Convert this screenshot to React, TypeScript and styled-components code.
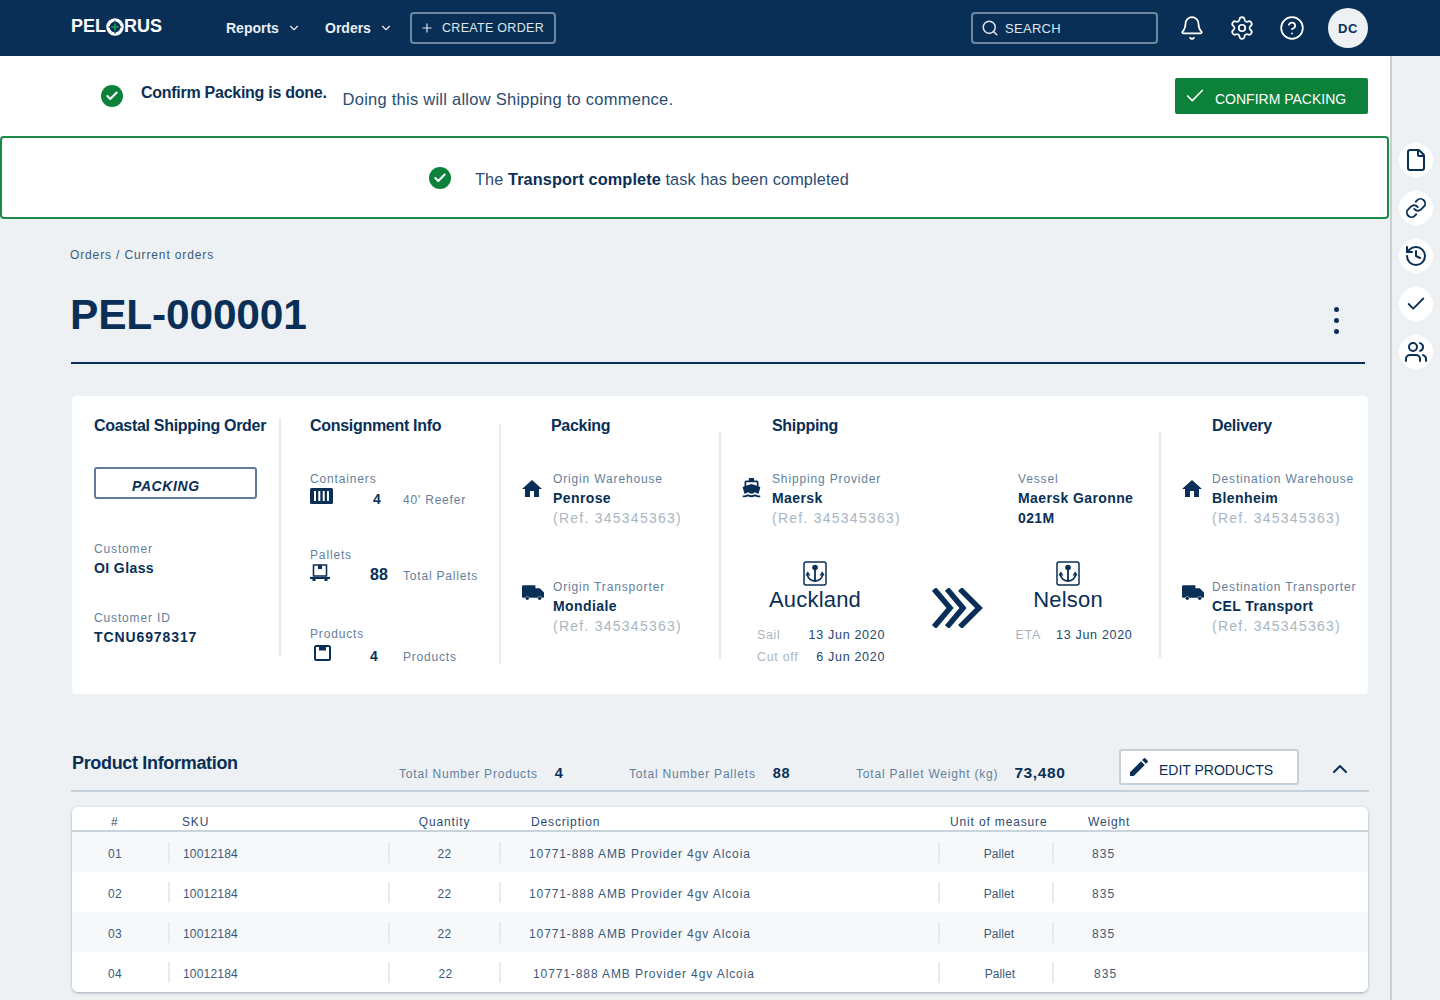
import { FC, ReactNode } from "react";
import styled, { createGlobalStyle } from "styled-components";
import {
  Bell,
  Check,
  ChevronDown,
  ChevronUp,
  CircleHelp,
  File,
  History,
  Link,
  Plus,
  Search,
  Settings,
  Users,
} from "lucide-react";
import { MdDirectionsBoat, MdEdit, MdHome } from "react-icons/md";

const NAVY = "#0a2f56";
const SLATE = "#64809c";
const MUTED = "#a9b6c3";
const GREEN = "#0b8139";
const BG = "#edf1f4";
const RULE = "#e6ebef";

const GlobalStyle = createGlobalStyle`
  html, body {
    margin: 0;
    padding: 0;
    background: ${BG};
    font-family: "Liberation Sans", Arial, sans-serif;
    color: ${NAVY};
    overflow: hidden;
  }
  * { box-sizing: border-box; }
`;

const Page = styled.div`
  width: 1440px;
  height: 1000px;
  display: flex;
  flex-direction: column;
`;

// Top navigation
const Nav = styled.header`
  height: 56px;
  flex: none;
  background: ${NAVY};
  color: #fff;
  display: flex;
  align-items: center;
  padding: 0 72px 0 71px;
`;

const Logo = styled.div`
  display: flex;
  align-items: center;
  width: 155px;
  font-size: 18px;
  font-weight: 700;
  margin-top: -3px;
`;

const NavLink = styled.div<{ $width: number }>`
  display: flex;
  align-items: center;
  gap: 8px;
  width: ${(p) => p.$width}px;
  font-size: 14px;
  font-weight: 700;
  color: #e9eef3;
`;

const CreateButton = styled.div`
  width: 146px;
  height: 32px;
  margin-left: -10px;
  border: 2px solid #6f87a0;
  border-radius: 4px;
  display: flex;
  align-items: center;
  gap: 8px;
  padding-left: 8px;
  font-size: 12.5px;
  letter-spacing: 0.3px;
  color: #dfe6ed;
  white-space: nowrap;
`;

const SearchBox = styled.div`
  width: 187px;
  height: 32px;
  margin-left: auto;
  border: 2px solid #6f87a0;
  border-radius: 4px;
  display: flex;
  align-items: center;
  gap: 6px;
  padding-left: 8px;
  font-size: 13px;
  letter-spacing: 0.3px;
  color: #dfe6ed;
`;

const NavIcons = styled.div`
  display: flex;
  align-items: center;
  gap: 24px;
  margin-left: 21px;
`;

const Avatar = styled.div`
  width: 40px;
  height: 40px;
  margin-left: -1px;
  border-radius: 50%;
  background: ${BG};
  color: ${NAVY};
  font-size: 13px;
  font-weight: 700;
  letter-spacing: 0.5px;
  display: flex;
  align-items: center;
  justify-content: center;
`;

const Body = styled.div`
  flex: 1;
  display: flex;
  min-height: 0;
`;

const Main = styled.main`
  width: 1390px;
  flex: none;
`;

const Rail = styled.aside`
  flex: 1;
  border-left: 2px solid #c9ced3;
  display: flex;
  flex-direction: column;
  align-items: center;
  gap: 14px;
  padding-top: 87px;
`;

const RailButton = styled.div`
  width: 34px;
  height: 34px;
  border-radius: 50%;
  background: #fff;
  display: flex;
  align-items: center;
  justify-content: center;
`;

// Banners
const ConfirmBar = styled.section`
  height: 80px;
  background: #fff;
  display: flex;
  align-items: center;
  padding: 0 22px 0 101px;
`;

const StatusDot = styled.div`
  width: 22px;
  height: 22px;
  flex: none;
  border-radius: 50%;
  background: ${GREEN};
  color: #fff;
  display: flex;
  align-items: center;
  justify-content: center;
`;

const ConfirmTitle = styled.strong`
  margin-left: 18px;
  margin-top: -6px;
  font-size: 16px;
  letter-spacing: -0.27px;
`;

const ConfirmText = styled.span`
  margin-left: 16px;
  margin-top: 6px;
  font-size: 16.5px;
  letter-spacing: 0.25px;
  color: #2b4c70;
`;

const ConfirmButton = styled.div`
  width: 193px;
  height: 36px;
  margin-left: auto;
  background: ${GREEN};
  border-radius: 2px;
  color: #fff;
  display: flex;
  align-items: center;
  gap: 9px;
  padding-left: 9px;
  font-size: 14px;

  span {
    margin-top: 6px;
  }
`;

const Alert = styled.section`
  width: 1389px;
  height: 83px;
  background: #fff;
  border: 2px solid #1d8a48;
  border-radius: 4px;
  display: flex;
  align-items: center;
  padding-left: 427px;
  gap: 24px;
  font-size: 16.3px;
  letter-spacing: 0.1px;
  color: #2b4c70;

  span {
    margin-top: 3px;
  }

  strong {
    color: ${NAVY};
  }
`;

// Order header
const Content = styled.div`
  padding: 28px 22px 0 70px;
`;

const Breadcrumb = styled.div`
  font-size: 12px;
  line-height: 16px;
  letter-spacing: 0.87px;
  color: #3c5a7a;
`;

const TitleRow = styled.div`
  height: 90px;
  margin: 11px 3px 0 1px;
  padding-bottom: 7px;
  border-bottom: 2px solid ${NAVY};
  display: flex;
  align-items: center;
  justify-content: space-between;
`;

const OrderTitle = styled.h1`
  margin: 0 0 0 -1px;
  font-size: 42.5px;
  font-weight: 700;
  letter-spacing: -0.2px;
  color: #0a2f56;
`;

const Kebab = styled.div`
  display: flex;
  flex-direction: column;
  gap: 6px;
  margin: 11px 26px 0 0;

  i {
    width: 5px;
    height: 5px;
    border-radius: 50%;
    background: ${NAVY};
  }
`;

// Summary card
const Card = styled.section`
  width: 1296px;
  height: 298px;
  margin: 32px 0 0 2px;
  background: #fff;
  border-radius: 4px;
  display: flex;
`;

const Column = styled.div<{ $width: number; $left: number }>`
  width: ${(p) => p.$width}px;
  flex: none;
  padding: 21px 0 0 ${(p) => p.$left}px;
`;

const VRule = styled.div<{ $top: number; $height: number }>`
  width: 2px;
  flex: none;
  align-self: flex-start;
  margin-top: ${(p) => p.$top}px;
  height: ${(p) => p.$height}px;
  background: ${RULE};
`;

const Heading = styled.h3<{ $indent?: number }>`
  margin: 0 0 -1px ${(p) => p.$indent ?? 0}px;
  font-size: 16px;
  line-height: 18px;
  font-weight: 700;
  letter-spacing: -0.3px;
  white-space: nowrap;
`;

const StatusBox = styled.div`
  width: 163px;
  height: 32px;
  margin-top: 33px;
  border: 2px solid #5f7d9a;
  border-radius: 3px;
  padding-left: 36px;
  font-size: 14px;
  line-height: 35px;
  font-weight: 700;
  font-style: italic;
  letter-spacing: 0.6px;
`;

const Label = styled.div`
  font-size: 12px;
  line-height: 18px;
  letter-spacing: 0.85px;
  color: ${SLATE};
  white-space: nowrap;
`;

const Strong = styled.div<{ $spacing?: number }>`
  font-size: 14px;
  line-height: 20px;
  font-weight: 700;
  letter-spacing: ${(p) => p.$spacing ?? 0.4}px;
  white-space: nowrap;
`;

const Ref = styled.div`
  font-size: 14px;
  line-height: 20px;
  letter-spacing: 1.25px;
  color: ${MUTED};
  white-space: nowrap;
`;

const Field = styled.div<{ $top: number }>`
  margin-top: ${(p) => p.$top}px;
`;

const StatRow = styled.div<{ $top?: number }>`
  display: grid;
  grid-template-columns: 60px 33px auto;
  align-items: center;
  height: 20px;
  margin-top: ${(p) => p.$top ?? 1}px;
`;

const StatIcon = styled.div`
  align-self: start;
  margin-top: -1px;
  line-height: 0;
`;

const StatNumber = styled.span<{ $size?: number; $indent?: number }>`
  padding-left: ${(p) => p.$indent ?? 0}px;
  font-size: ${(p) => p.$size ?? 14}px;
  font-weight: 700;
`;

const StatText = styled.span`
  margin-top: 2px;
  font-size: 12px;
  letter-spacing: 0.8px;
  color: ${SLATE};
`;

const Party = styled.div<{ $top: number; $gap?: number }>`
  display: grid;
  grid-template-columns: ${(p) => p.$gap ?? 31}px auto;
  margin-top: ${(p) => p.$top}px;
`;

const PartyIcon = styled.div`
  padding-top: 7px;
  line-height: 0;
`;

const ShipRow = styled.div`
  display: flex;
  margin-top: 36px;
`;

const ShipProvider = styled.div`
  width: 276px;
`;

const RouteRow = styled.div`
  display: flex;
  margin-top: 33px;
`;

const Port = styled.div<{ $width: number }>`
  width: ${(p) => p.$width}px;
  flex: none;
  display: flex;
  flex-direction: column;
  align-items: center;
`;

const PortName = styled.div`
  font-size: 22px;
  line-height: 28px;
  letter-spacing: 0.2px;
`;

const Dates = styled.div`
  margin: 12px 0 0 12px;
  display: flex;
  flex-direction: column;
  gap: 4px;
`;

const DateRow = styled.div<{ $gap: number }>`
  display: flex;
  justify-content: space-between;
  gap: ${(p) => p.$gap}px;
  font-size: 12.5px;
  line-height: 18px;
  letter-spacing: 0.7px;
  color: #24476b;
  white-space: nowrap;

  span {
    color: ${MUTED};
  }
`;

const Arrows = styled.div`
  width: 51px;
  flex: none;
  margin: 27px 0 0 44px;
  line-height: 0;
`;

// Product section
const ProductHeader = styled.div`
  width: 1298px;
  height: 43px;
  margin: 55px 0 0 1px;
  border-bottom: 2px solid #c5d0d9;
  display: flex;
  align-items: flex-start;
`;

const ProductTitle = styled.h2`
  width: 327px;
  margin: 3px 0 0 1px;
  font-size: 18px;
  line-height: 22px;
  letter-spacing: -0.33px;
`;

const Totals = styled.div`
  display: flex;
  align-items: center;
  height: 20px;
  margin-top: 14px;
  width: 720px;
`;

const TotalItem = styled.div<{ $width: number; $gap?: number }>`
  width: ${(p) => p.$width}px;
  flex: none;
  display: flex;
  align-items: center;
  gap: ${(p) => p.$gap ?? 17}px;
`;

const TotalValue = styled.span<{ $size?: number }>`
  font-size: ${(p) => p.$size ?? 14.5}px;
  font-weight: 700;
  letter-spacing: 0.6px;
`;

const EditButton = styled.div`
  width: 180px;
  height: 36px;
  flex: none;
  background: #fff;
  border: 2px solid #c5d0d9;
  border-radius: 3px;
  display: flex;
  align-items: center;
  gap: 8px;
  padding-left: 6px;
  font-size: 14px;
  color: ${NAVY};

  span {
    margin-top: 5px;
  }
`;

const Collapse = styled.div`
  margin: 8px 0 0 29px;
  line-height: 0;
`;

const Table = styled.section`
  width: 1296px;
  margin: 15px 0 0 2px;
  background: #fff;
  border-radius: 6px;
  box-shadow: 0 1px 3px rgba(60, 80, 100, 0.45);
  overflow: hidden;
`;

const GRID = "96px 220px 111px 439px 114px 316px";

const HeadRow = styled.div`
  display: grid;
  grid-template-columns: ${GRID};
  height: 25px;
  padding-top: 7px;
  border-bottom: 2px solid #c8d3dc;
  align-items: center;
  font-size: 12px;
  letter-spacing: 0.85px;
  color: #2b4c70;
`;

const HeadCell = styled.div<{ $center?: boolean; $indent?: number }>`
  padding-left: ${(p) => p.$indent ?? 0}px;
  text-align: ${(p) => (p.$center ? "center" : "left")};
  white-space: nowrap;
`;

const Row = styled.div<{ $shade: boolean }>`
  display: grid;
  grid-template-columns: ${GRID};
  height: 40px;
  align-items: center;
  background: ${(p) => (p.$shade ? "#f6f8f9" : "#fff")};
`;

const Cell = styled.div<{ $center?: boolean; $indent?: number; $rule?: boolean; $spacing?: number }>`
  height: 21px;
  line-height: 25px;
  padding-left: ${(p) => p.$indent ?? 0}px;
  text-align: ${(p) => (p.$center ? "center" : "left")};
  border-left: ${(p) => (p.$rule ? `2px solid ${RULE}` : "0")};
  font-size: 12px;
  letter-spacing: ${(p) => p.$spacing ?? 0.4}px;
  color: #3c5a7a;
  white-space: nowrap;
`;

// Drawn icons
const Truck: FC = () => (
  <svg width="22" height="16" viewBox="0 0 23 16" fill={NAVY}>
    <path d="M0 1.5A1.5 1.5 0 0 1 1.5 0H14v3h4.500L23 7.500V12a1 1 0 0 1-1 1h-1.200a2.400 2.400 0 0 0-4.600 0H7.800a2.400 2.400 0 0 0-4.600 0H1a1 1 0 0 1-1-1z" />
    <circle cx="5.500" cy="13.500" r="1.800" />
    <circle cx="18.500" cy="13.500" r="1.800" />
  </svg>
);

const ContainerIcon: FC = () => (
  <svg width="23" height="16" viewBox="0 0 23 16">
    <rect width="23" height="16" rx="1.500" fill={NAVY} />
    <path d="M5 3v10M9.300 3v10M13.700 3v10M18 3v10" stroke="#fff" strokeWidth="2" />
  </svg>
);

const PalletIcon: FC = () => (
  <svg width="20" height="18" viewBox="0 0 20 18" fill="none">
    <path d="M3.500 1h13v11h-13z" stroke={NAVY} strokeWidth="1.600" />
    <path d="M8 1h4v4H8z" fill={NAVY} />
    <path d="M0 13h20v2H17.500v2h-3v-2h-9v2h-3v-2H0z" fill={NAVY} />
  </svg>
);

const BoxIcon: FC = () => (
  <svg width="24" height="16" viewBox="0 0 24 16" fill="none">
    <rect x="5" y="1" width="15" height="14" rx="1.500" stroke={NAVY} strokeWidth="2" />
    <path d="M9 1h7v4.500H9z" fill={NAVY} />
  </svg>
);

const AnchorIcon: FC = () => (
  <svg width="24" height="25" viewBox="0 0 24 25" fill="none">
    <rect x="1" y="1" width="22" height="23" rx="2" stroke={NAVY} strokeWidth="1.500" />
    <circle cx="12" cy="6.500" r="2.800" fill={NAVY} />
    <path d="M12 8v12M4.500 13c0 4.500 3.500 7 7.500 7s7.500-2.500 7.500-7" stroke={NAVY} strokeWidth="1.800" />
    <path d="M3 14.500 4.800 11.500l2 3M17.200 14.500l2-3 1.800 3" stroke={NAVY} strokeWidth="1.300" />
  </svg>
);

const TripleChevron: FC = () => (
  <svg width="51" height="40" viewBox="0 0 51 40" fill="none" stroke={NAVY} strokeWidth="5.500">
    <path d="M2 1l16 19L2 39" />
    <path d="M15 1l16 19-16 19" />
    <path d="M28 1l19 19-19 19" />
  </svg>
);

const LogoMark: FC = () => (
  <svg width="18" height="18" viewBox="0 0 19 19">
    <circle cx="9.500" cy="9.500" r="7.500" fill="none" stroke="#fff" strokeWidth="3.500" />
    <path d="M9.500 1.500 11.300 7.700 17.500 9.500 11.300 11.300 9.500 17.500 7.700 11.300 1.500 9.500 7.700 7.700z" fill={NAVY} />
    <path d="M9.500 4 10.800 8.200 15 9.500 10.800 10.800 9.500 15 8.200 10.800 4 9.500 8.200 8.200z" fill="#1d8a48" />
  </svg>
);

const Tick: FC<{ size?: number }> = ({ size = 14 }) => (
  <Check size={size} strokeWidth={3.5} />
);

interface PartyProps {
  top: number;
  icon: ReactNode;
  label: string;
  name: string;
  gap?: number;
}

const PartyBlock: FC<PartyProps> = ({ top, icon, label, name, gap }) => (
  <Party $top={top} $gap={gap}>
    <PartyIcon>{icon}</PartyIcon>
    <div>
      <Label>{label}</Label>
      <Strong>{name}</Strong>
      <Ref>(Ref. 345345363)</Ref>
    </div>
  </Party>
);

const rows = ["01", "02", "03", "04"];

const App: FC = () => {
  return (
    <Page>
      <GlobalStyle />
      <Nav>
        <Logo>
          PEL
          <LogoMark />
          RUS
        </Logo>
        <NavLink $width={99}>
          Reports <ChevronDown size={14} />
        </NavLink>
        <NavLink $width={95}>
          Orders <ChevronDown size={14} />
        </NavLink>
        <CreateButton>
          <Plus size={14} />
          CREATE ORDER
        </CreateButton>
        <SearchBox>
          <Search size={18} />
          SEARCH
        </SearchBox>
        <NavIcons>
          <Bell size={26} strokeWidth={1.6} />
          <Settings size={26} strokeWidth={1.6} />
          <CircleHelp size={26} strokeWidth={1.6} />
          <Avatar>DC</Avatar>
        </NavIcons>
      </Nav>
      <Body>
        <Main>
          <ConfirmBar>
            <StatusDot>
              <Tick />
            </StatusDot>
            <ConfirmTitle>Confirm Packing is done.</ConfirmTitle>
            <ConfirmText>Doing this will allow Shipping to commence.</ConfirmText>
            <ConfirmButton>
              <Check size={22} strokeWidth={1.8} />
              <span>CONFIRM PACKING</span>
            </ConfirmButton>
          </ConfirmBar>
          <Alert>
            <StatusDot>
              <Tick />
            </StatusDot>
            <span>
              The <strong>Transport complete</strong> task has been completed
            </span>
          </Alert>
          <Content>
            <Breadcrumb>Orders / Current orders</Breadcrumb>
            <TitleRow>
              <OrderTitle>PEL-000001</OrderTitle>
              <Kebab>
                <i />
                <i />
                <i />
              </Kebab>
            </TitleRow>
            <Card>
              <Column $width={207} $left={22}>
                <Heading>Coastal Shipping Order</Heading>
                <StatusBox>PACKING</StatusBox>
                <Field $top={41}>
                  <Label>Customer</Label>
                  <Strong>OI Glass</Strong>
                </Field>
                <Field $top={31}>
                  <Label>Customer ID</Label>
                  <Strong $spacing={0.9}>TCNU6978317</Strong>
                </Field>
              </Column>
              <VRule $top={22} $height={238} />
              <Column $width={218} $left={29}>
                <Heading>Consignment Info</Heading>
                <Field $top={36}>
                  <Label>Containers</Label>
                  <StatRow>
                    <StatIcon>
                      <ContainerIcon />
                    </StatIcon>
                    <StatNumber $indent={3}>4</StatNumber>
                    <StatText>40' Reefer</StatText>
                  </StatRow>
                </Field>
                <Field $top={37}>
                  <Label>Pallets</Label>
                  <StatRow>
                    <StatIcon>
                      <PalletIcon />
                    </StatIcon>
                    <StatNumber $size={16}>88</StatNumber>
                    <StatText>Total Pallets</StatText>
                  </StatRow>
                </Field>
                <Field $top={40}>
                  <Label>Products</Label>
                  <StatRow $top={3}>
                    <StatIcon>
                      <BoxIcon />
                    </StatIcon>
                    <StatNumber>4</StatNumber>
                    <StatText>Products</StatText>
                  </StatRow>
                </Field>
              </Column>
              <VRule $top={28} $height={240} />
              <Column $width={218} $left={21}>
                <Heading $indent={29}>Packing</Heading>
                <PartyBlock
                  top={36}
                  label="Origin Warehouse"
                  name="Penrose"
                  icon={<MdHome size={24} color={NAVY} style={{ marginLeft: -2 }} />}
                />
                <PartyBlock top={50} label="Origin Transporter" name="Mondiale" icon={<Truck />} />
              </Column>
              <VRule $top={36} $height={228} />
              <Column $width={438} $left={21}>
                <Heading $indent={30}>Shipping</Heading>
                <ShipRow>
                  <ShipProvider>
                    <PartyBlock
                      top={0}
                      gap={30}
                      label="Shipping Provider"
                      name="Maersk"
                      icon={<MdDirectionsBoat size={21} color={NAVY} style={{ marginLeft: -1 }} />}
                    />
                  </ShipProvider>
                  <div>
                    <Label>Vessel</Label>
                    <Strong>Maersk Garonne</Strong>
                    <Strong>021M</Strong>
                  </div>
                </ShipRow>
                <RouteRow>
                  <Port $width={146}>
                    <AnchorIcon />
                    <PortName>Auckland</PortName>
                    <Dates>
                      <DateRow $gap={28}>
                        <span>Sail</span>13 Jun 2020
                      </DateRow>
                      <DateRow $gap={15}>
                        <span>Cut off</span>6 Jun 2020
                      </DateRow>
                    </Dates>
                  </Port>
                  <Arrows>
                    <TripleChevron />
                  </Arrows>
                  <Port $width={170}>
                    <AnchorIcon />
                    <PortName>Nelson</PortName>
                    <Dates>
                      <DateRow $gap={15}>
                        <span>ETA</span>13 Jun 2020
                      </DateRow>
                    </Dates>
                  </Port>
                </RouteRow>
              </Column>
              <VRule $top={36} $height={226} />
              <Column $width={205} $left={21}>
                <Heading $indent={30}>Delivery</Heading>
                <PartyBlock
                  top={36}
                  gap={30}
                  label="Destination Warehouse"
                  name="Blenheim"
                  icon={<MdHome size={24} color={NAVY} style={{ marginLeft: -2 }} />}
                />
                <PartyBlock
                  top={50}
                  gap={30}
                  label="Destination Transporter"
                  name="CEL Transport"
                  icon={<Truck />}
                />
              </Column>
            </Card>
            <ProductHeader>
              <ProductTitle>Product Information</ProductTitle>
              <Totals>
                <TotalItem $width={230}>
                  <StatText>Total Number Products</StatText>
                  <TotalValue>4</TotalValue>
                </TotalItem>
                <TotalItem $width={227}>
                  <StatText>Total Number Pallets</StatText>
                  <TotalValue>88</TotalValue>
                </TotalItem>
                <TotalItem $width={263} $gap={16}>
                  <StatText>Total Pallet Weight (kg)</StatText>
                  <TotalValue $size={15.5}>73,480</TotalValue>
                </TotalItem>
              </Totals>
              <EditButton>
                <MdEdit size={24} color={NAVY} />
                <span>EDIT PRODUCTS</span>
              </EditButton>
              <Collapse>
                <ChevronUp size={24} strokeWidth={2} color={NAVY} />
              </Collapse>
            </ProductHeader>
            <Table>
              <HeadRow>
                <HeadCell $indent={39}>#</HeadCell>
                <HeadCell $indent={14}>SKU</HeadCell>
                <HeadCell $center $indent={2}>
                  Quantity
                </HeadCell>
                <HeadCell $indent={32}>Description</HeadCell>
                <HeadCell $indent={12}>Unit of measure</HeadCell>
                <HeadCell $indent={36}>Weight</HeadCell>
              </HeadRow>
              {rows.map((n, i) => {
                // last row sits a few pixels right in the design
                const last = i === rows.length - 1;
                return (
                  <Row key={n} $shade={i % 2 === 0}>
                    <Cell $indent={36}>{n}</Cell>
                    <Cell $rule $indent={13} $spacing={0.2}>
                      10012184
                    </Cell>
                    <Cell $rule $center $indent={last ? 2 : 0}>
                      22
                    </Cell>
                    <Cell $rule $indent={last ? 32 : 28} $spacing={0.9}>
                      10771-888 AMB Provider 4gv Alcoia
                    </Cell>
                    <Cell $rule $center $indent={last ? 8 : 6} $spacing={0.1}>
                      Pallet
                    </Cell>
                    <Cell $rule $indent={last ? 40 : 38} $spacing={1.1}>
                      835
                    </Cell>
                  </Row>
                );
              })}
            </Table>
          </Content>
        </Main>
        <Rail>
          <RailButton>
            <File size={24} color={NAVY} strokeWidth={2} />
          </RailButton>
          <RailButton>
            <Link size={22} color={NAVY} strokeWidth={2} />
          </RailButton>
          <RailButton>
            <History size={24} color={NAVY} strokeWidth={2} />
          </RailButton>
          <RailButton>
            <Check size={22} color={NAVY} strokeWidth={2} />
          </RailButton>
          <RailButton>
            <Users size={24} color={NAVY} strokeWidth={2} />
          </RailButton>
        </Rail>
      </Body>
    </Page>
  );
};

export default App;
